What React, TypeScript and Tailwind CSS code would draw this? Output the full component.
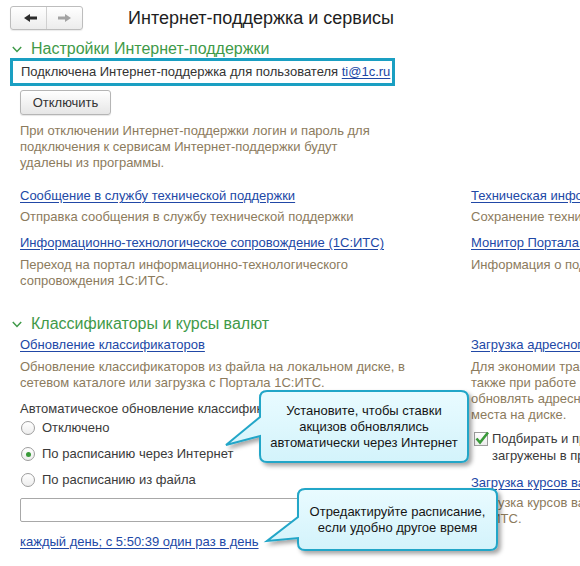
import React from "react";

const linkCls =
  "text-[#2148a6] underline underline-offset-[2px] decoration-[#2148a6] text-[13px] leading-[16px] whitespace-nowrap cursor-pointer";
const descCls = "text-[#8c7b5d] text-[13px] leading-[16px] whitespace-nowrap";

function Chevron() {
  return (
    <svg width="10" height="7" viewBox="0 0 10 7" fill="none">
      <path d="M0.8 1 L5 5.4 L9.2 1" stroke="#3f9a49" strokeWidth="1.5" />
    </svg>
  );
}

function SectionHeader({ title }: { title: string }) {
  return (
    <div className="flex items-center h-[18px] pl-[12px] gap-[9px]">
      <Chevron />
      <span className="text-[16px] leading-[18px] text-[#3f9a49] whitespace-nowrap">
        {title}
      </span>
    </div>
  );
}

function NavButtons() {
  return (
    <div className="ml-[10px] flex h-[24px] w-[73px] rounded-[3px] border border-[#bdbdbd] bg-gradient-to-b from-white to-[#ececec] shadow-[0_1px_1px_rgba(0,0,0,0.08)]">
      <div className="w-[36px] h-full border-r border-[#d0d0d0]">
        <svg width="36" height="22" viewBox="0 0 36 22">
          <path d="M13 11 L19 7 L19 9.5 L26 9.5 L26 12.5 L19 12.5 L19 15 Z" fill="#2b2b2b" />
        </svg>
      </div>
      <div className="w-[36px] h-full">
        <svg width="36" height="22" viewBox="0 0 36 22">
          <path d="M24 11 L18 7 L18 9.5 L11 9.5 L11 12.5 L18 12.5 L18 15 Z" fill="#a3a3a3" />
        </svg>
      </div>
    </div>
  );
}

function Radio({ label, checked }: { label: string; checked?: boolean }) {
  return (
    <div className="flex items-center h-[26px] pl-[1px] gap-[7px]">
      <span className="flex items-center justify-center w-[14px] h-[14px] rounded-full border border-[#9d9d9d] bg-gradient-to-b from-white to-[#ededed]">
        {checked && <span className="w-[5px] h-[5px] rounded-full bg-[#3a9a3a]" />}
      </span>
      <span className="text-[13px] leading-[16px] text-[#3a3a3a] whitespace-nowrap">{label}</span>
    </div>
  );
}

function Callout({
  left,
  top,
  width,
  height,
  path,
  box,
  lines,
}: {
  left: number;
  top: number;
  width: number;
  height: number;
  path: string;
  box: { x: number; y: number; w: number; h: number };
  lines: string[];
}) {
  const id = "sh" + left;
  return (
    <div className="absolute" style={{ left, top, width, height }}>
      <svg width={width} height={height} className="absolute left-0 top-0">
        <defs>
          <filter id={id} x="-10%" y="-10%" width="125%" height="135%">
            <feDropShadow dx="3" dy="3" stdDeviation="2" floodColor="#000" floodOpacity="0.35" />
          </filter>
          <linearGradient id={id + "g"} x1="0" y1="0" x2="0" y2="1">
            <stop offset="0" stopColor="#e9fbff" />
            <stop offset="1" stopColor="#d3f3fb" />
          </linearGradient>
        </defs>
        <path d={path} fill={`url(#${id}g)`} stroke="#22a6c8" strokeWidth="2" filter={`url(#${id})`} />
      </svg>
      <div
        className="absolute flex flex-col items-center justify-center text-center text-[13px] leading-[16px] text-[#151515]"
        style={{ left: box.x, top: box.y, width: box.w, height: box.h }}
      >
        {lines.map((l) => (
          <span key={l} className="whitespace-nowrap">
            {l}
          </span>
        ))}
      </div>
    </div>
  );
}

export default function App() {
  return (
    <div className="relative w-[580px] h-[566px] overflow-hidden bg-white font-[family-name:'Liberation_Sans',Arial,sans-serif]">
      {/* Top bar */}
      <div className="pt-[6px] flex items-center">
        <NavButtons />
        <h1 className="ml-[45px] text-[18px] leading-[24px] text-[#1e1e1e] whitespace-nowrap">
          Интернет-поддержка и сервисы
        </h1>
      </div>

      {/* Section 1 */}
      <div className="mt-[10px]">
        <SectionHeader title="Настройки Интернет-поддержки" />
      </div>
      <div className="ml-[10px] w-[385px] h-[28px] border-[3px] border-[#1a9fc2] pl-[8px] flex items-center">
        <span className="text-[13px] leading-[16px] text-[#333] whitespace-nowrap">
          Подключена Интернет-поддержка для пользователя{" "}
          <a className="text-[#2148a6] underline underline-offset-[2px]">ti@1c.ru</a>
        </span>
      </div>
      <button className="mt-[4px] ml-[20px] w-[91px] h-[25px] rounded-[3px] border border-[#b5b5b5] bg-gradient-to-b from-white to-[#e6e6e6] text-[13px] text-[#333] shadow-[0_1px_1px_rgba(0,0,0,0.1)]">
        Отключить
      </button>
      <p className={descCls + " mt-[8px] ml-[20px]"}>
        При отключении Интернет-поддержки логин и пароль для
        <br />
        подключения к сервисам Интернет-поддержки будут
        <br />
        удалены из программы.
      </p>

      <div className="mt-[17px] ml-[20px] grid grid-cols-[451px_1fr]">
        <div className="flex flex-col items-start">
          <a className={linkCls}>Сообщение в службу технической поддержки</a>
          <p className={descCls + " mt-[5px]"}>Отправка сообщения в службу технической поддержки</p>
          <a className={linkCls + " mt-[10px]"}>Информационно-технологическое сопровождение (1С:ИТС)</a>
          <p className={descCls + " mt-[6px]"}>
            Переход на портал информационно-технологического
            <br />
            сопровождения 1С:ИТС.
          </p>
        </div>
        <div className="flex flex-col items-start">
          <a className={linkCls}>Техническая информация о программе</a>
          <p className={descCls + " mt-[5px]"}>Сохранение технической информации</p>
          <a className={linkCls + " mt-[10px]"}>Монитор Портала 1С:ИТС</a>
          <p className={descCls + " mt-[6px]"}>Информация о подключении к Порталу</p>
        </div>
      </div>

      {/* Section 2 */}
      <div className="mt-[26px]">
        <SectionHeader title="Классификаторы и курсы валют" />
      </div>
      <div className="mt-[4px] ml-[20px] grid grid-cols-[451px_1fr]">
        <div className="flex flex-col items-start">
          <a className={linkCls}>Обновление классификаторов</a>
          <p className={descCls + " mt-[6px]"}>
            Обновление классификаторов из файла на локальном диске, в
            <br />
            сетевом каталоге или загрузка с Портала 1С:ИТС.
          </p>
          <p className="mt-[10px] text-[13px] leading-[16px] text-[#3a3a3a] whitespace-nowrap">
            Автоматическое обновление классификаторов:
          </p>
          <div className="mt-[-2px] flex flex-col">
            <Radio label="Отключено" />
            <Radio label="По расписанию через Интернет" checked />
            <Radio label="По расписанию из файла" />
          </div>
          <input
            className="mt-[5px] w-[420px] h-[24px] rounded-[2px] border border-[#a8a8a8] bg-white outline-none"
            readOnly
          />
          <a className={linkCls + " mt-[12px]"}>каждый день; с 5:50:39 один раз в день</a>
        </div>
        <div className="flex flex-col items-start">
          <a className={linkCls}>Загрузка адресного классификатора</a>
          <p className={descCls + " mt-[6px]"}>
            Для экономии трафика рекомендуется,
            <br />
            также при работе без Интернета,
            <br />
            обновлять адресный классификатор
            <br />
            места на диске.
          </p>
          <div className="mt-[7px] flex items-start">
            <span className="relative mt-[2px] ml-[3px] w-[14px] h-[14px] border border-[#9d9d9d] bg-gradient-to-b from-white to-[#ededed]">
              <svg width="16" height="16" viewBox="0 0 16 16" className="absolute left-[-1px] top-[-3px]">
                <path d="M2.5 8.5 L6 12.5 L14 2.5" stroke="#3a9a3a" strokeWidth="2.6" fill="none" />
              </svg>
            </span>
            <span className="ml-[4px] text-[13px] leading-[17px] text-[#3a3a3a] whitespace-nowrap">
              Подбирать и проверять адреса,
              <br />
              загружены в программу
            </span>
          </div>
          <a className={linkCls + " mt-[11px]"}>Загрузка курсов валют</a>
          <p className={descCls + " mt-[4px]"}>
            Загрузка курсов валют с Портала
            <br />
            1С:ИТС.
          </p>
        </div>
      </div>

      {/* Callouts */}
      <Callout
        left={220}
        top={385}
        width={262}
        height={92}
        path="M47 6 H241 Q248 6 248 13 V70 Q248 77 241 77 H47 Q40 77 40 70 V51 L6 60 L40 32 V13 Q40 6 47 6 Z"
        box={{ x: 40, y: 6, w: 208, h: 71 }}
        lines={["Установите, чтобы ставки", "акцизов обновлялись", "автоматически через Интернет"]}
      />
      <Callout
        left={260}
        top={483}
        width={252}
        height={82}
        path="M45 6 H230 Q237 6 237 13 V60 Q237 67 230 67 H45 Q38 67 38 60 V55 L7 58 L38 34 V13 Q38 6 45 6 Z"
        box={{ x: 38, y: 6, w: 199, h: 61 }}
        lines={["Отредактируйте расписание,", "если удобно другое время"]}
      />
    </div>
  );
}
